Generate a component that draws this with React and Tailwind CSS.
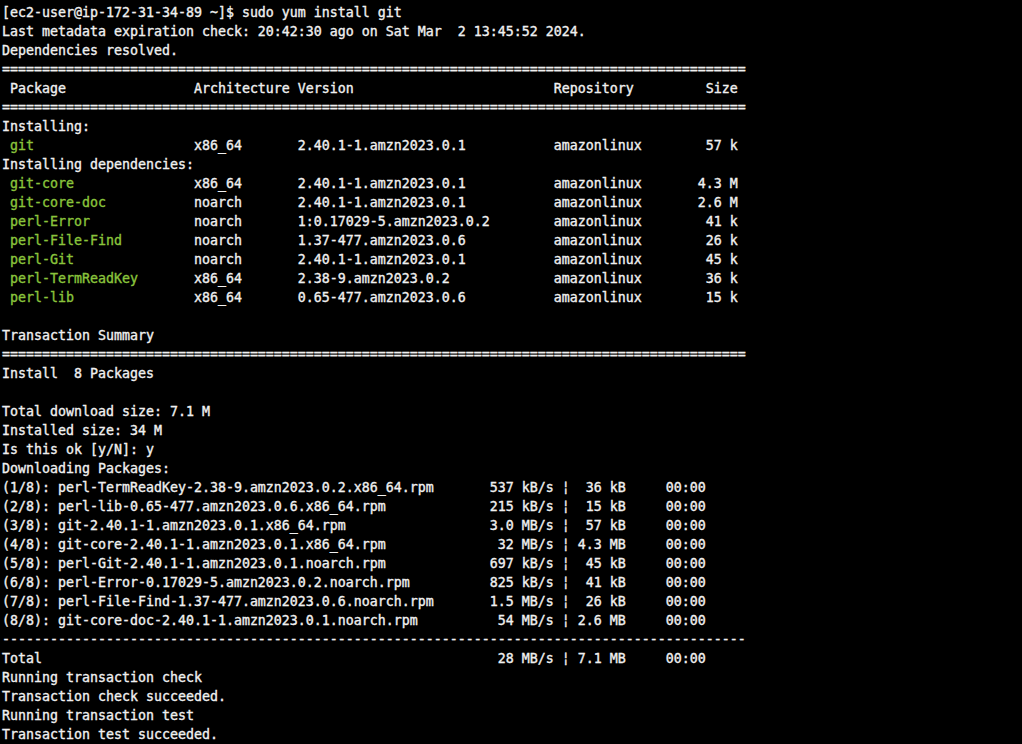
import React from "react";

const G = ({ children }) => <span className="text-[#8ac43c]">{children}</span>;

const pkgs = [
  ["git-core", "x86_64", "2.40.1-1.amzn2023.0.1", "4.3 M"],
  ["git-core-doc", "noarch", "2.40.1-1.amzn2023.0.1", "2.6 M"],
  ["perl-Error", "noarch", "1:0.17029-5.amzn2023.0.2", "41 k"],
  ["perl-File-Find", "noarch", "1.37-477.amzn2023.0.6", "26 k"],
  ["perl-Git", "noarch", "2.40.1-1.amzn2023.0.1", "45 k"],
  ["perl-TermReadKey", "x86_64", "2.38-9.amzn2023.0.2", "36 k"],
  ["perl-lib", "x86_64", "0.65-477.amzn2023.0.6", "15 k"],
];

const downloads = [
  ["(1/8): perl-TermReadKey-2.38-9.amzn2023.0.2.x86_64.rpm", "537 kB/s", "36 kB"],
  ["(2/8): perl-lib-0.65-477.amzn2023.0.6.x86_64.rpm", "215 kB/s", "15 kB"],
  ["(3/8): git-2.40.1-1.amzn2023.0.1.x86_64.rpm", "3.0 MB/s", "57 kB"],
  ["(4/8): git-core-2.40.1-1.amzn2023.0.1.x86_64.rpm", "32 MB/s", "4.3 MB"],
  ["(5/8): perl-Git-2.40.1-1.amzn2023.0.1.noarch.rpm", "697 kB/s", "45 kB"],
  ["(6/8): perl-Error-0.17029-5.amzn2023.0.2.noarch.rpm", "825 kB/s", "41 kB"],
  ["(7/8): perl-File-Find-1.37-477.amzn2023.0.6.noarch.rpm", "1.5 MB/s", "26 kB"],
  ["(8/8): git-core-doc-2.40.1-1.amzn2023.0.1.noarch.rpm", "54 MB/s", "2.6 MB"],
];

function PkgRow({ name, arch, ver, size }) {
  const rest =
    " ".repeat(23 - name.length) +
    arch.padEnd(13) +
    ver.padEnd(32) +
    "amazonlinux" +
    size.padStart(12);
  return (
    <div>
      {" "}
      <G>{name}</G>
      {rest}
    </div>
  );
}

function DlRow({ name, rate, size }) {
  return (
    <div>
      {name.padEnd(61) + rate.padStart(8) + " ¦ " + size.padStart(6) + "     00:00"}
    </div>
  );
}

export default function App() {
  const eq = "=".repeat(93);
  const dash = "-".repeat(93);
  const header =
    " Package".padEnd(24) + "Architecture".padEnd(13) + "Version".padEnd(32) + "Repository" + "Size".padStart(13);
  return (
    <div
      className="w-[1022px] h-[744px] bg-black text-[#f0f0f0] overflow-hidden pt-[3px] pl-[2px] whitespace-pre text-[13.29px] leading-[19px] [-webkit-text-stroke:0.35px]"
      style={{ fontFamily: '"DejaVu Sans Mono", monospace' }}
    >
      <div>[ec2-user@ip-172-31-34-89 ~]$ sudo yum install git</div>
      <div>Last metadata expiration check: 20:42:30 ago on Sat Mar  2 13:45:52 2024.</div>
      <div>Dependencies resolved.</div>
      <div>{eq}</div>
      <div>{header}</div>
      <div>{eq}</div>
      <div>Installing:</div>
      <PkgRow name="git" arch="x86_64" ver="2.40.1-1.amzn2023.0.1" size="57 k" />
      <div>Installing dependencies:</div>
      {pkgs.map(([n, a, v, s]) => (
        <PkgRow key={n} name={n} arch={a} ver={v} size={s} />
      ))}
      <div> </div>
      <div>Transaction Summary</div>
      <div>{eq}</div>
      <div>Install  8 Packages</div>
      <div> </div>
      <div>Total download size: 7.1 M</div>
      <div>Installed size: 34 M</div>
      <div>Is this ok [y/N]: y</div>
      <div>Downloading Packages:</div>
      {downloads.map(([n, r, s]) => (
        <DlRow key={n} name={n} rate={r} size={s} />
      ))}
      <div>{dash}</div>
      <DlRow name="Total" rate="28 MB/s" size="7.1 MB" />
      <div>Running transaction check</div>
      <div>Transaction check succeeded.</div>
      <div>Running transaction test</div>
      <div>Transaction test succeeded.</div>
    </div>
  );
}
